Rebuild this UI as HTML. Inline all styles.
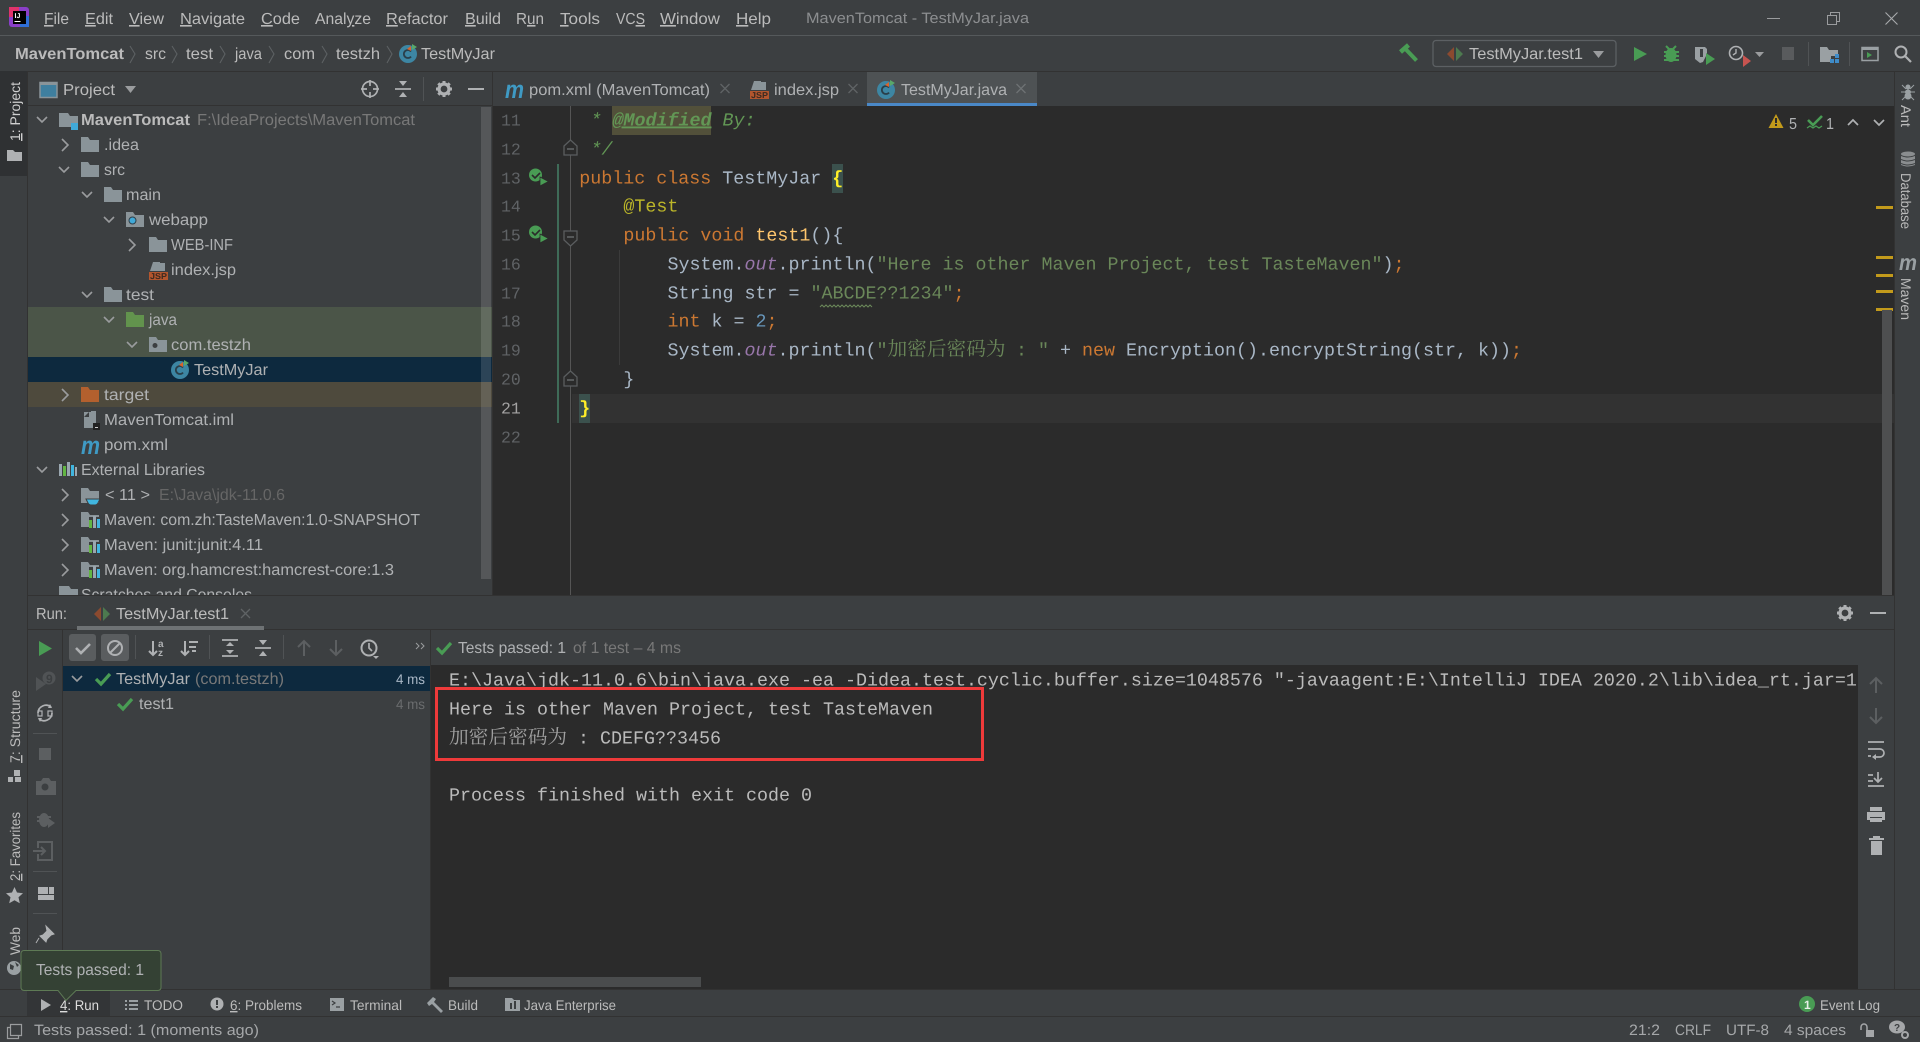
<!DOCTYPE html>
<html><head><meta charset="utf-8"><title>MavenTomcat</title>
<style>
html,body{margin:0;padding:0;background:#3c3f41;overflow:hidden}
svg{display:block}
text{font-family:"Liberation Sans","Noto Sans CJK SC",sans-serif;font-size:16px;fill:#bbb;white-space:pre;text-rendering:geometricPrecision}
.t{fill:#afb1b3}
.g{fill:#787878}
.sm{font-size:14px}
.m{font-family:"Liberation Mono",monospace;font-size:18.34px;fill:#a9b7c6;white-space:pre}
.c{font-family:"Liberation Mono",monospace;font-size:18.34px;fill:#bbb;white-space:pre}
.ln{font-family:"Liberation Mono",monospace;font-size:16.5px;fill:#606366}
.cj{font-family:"Noto Serif CJK SC","Noto Sans CJK SC",serif;font-size:19.7px}
.k{fill:#cc7832}.s{fill:#6a8759}.d{fill:#629755;font-style:italic}.o{fill:#9876aa;font-style:italic}.n{fill:#6897bb}.a{fill:#bbb529}.f{fill:#ffc66d}
.ch{fill:none;stroke:#9a9c9e;stroke-width:1.6}
.ic{fill:none;stroke:#afb1b3;stroke-width:1.7}
.dis{fill:none;stroke:#5c5f61;stroke-width:2}
</style></head>
<body>
<svg width="1920" height="1042" viewBox="0 0 1920 1042" xmlns="http://www.w3.org/2000/svg">
<defs>
<path id="fo" d="M0 0h7l2 3h9v12H0z"/>
<g id="cl"><circle cx="9" cy="10" r="9" fill="#3d86a3"/><path d="M12 7.500a4 4 0 1 0 0 5" fill="none" stroke="#2a3f4a" stroke-width="1.800"/><path d="M8 5l4-3v5z" fill="#d9642b"/><path d="M13 0l5 3-5 3z" fill="#59a869"/></g>
<g id="dm"><path d="M7 0L0 7l7 7z" fill="#8c4a2f"/><path d="M9 0l7 7-7 7z" fill="#4d7a4f"/></g>
<g id="lib"><use href="#fo" fill="#8a9499"/><rect x="8" y="5" width="11" height="11" fill="#3c3f41"/><rect x="8" y="8" width="3" height="8" fill="#62b543"/><rect x="12" y="4" width="3" height="12" fill="#9aa7b0"/><rect x="16" y="7" width="3" height="9" fill="#40b6e0"/></g>
<g id="gr"><circle cx="5.500" cy="6" r="6.500" fill="#499c54"/><path d="M2 6l3 3 5-5" fill="none" stroke="#2b2b2b" stroke-width="1.600"/><path d="M10 8l8.500 4.500L10 17z" fill="#499c54" stroke="#2b2b2b" stroke-width=".8"/></g>
<g id="gear"><circle cx="8" cy="8" r="5" fill="none" stroke="#afb1b3" stroke-width="3.200"/><path d="M8 0v3M8 13v3M0 8h3M13 8h3M2.300 2.300l2 2M11.700 11.700l2 2M13.700 2.300l-2 2M4.300 11.700l-2 2" stroke="#afb1b3" stroke-width="3"/></g>
<g id="ck"><path d="M0 6l5 5L14 1" fill="none" stroke="#499c54" stroke-width="3.200"/></g>
<g id="fd"><path d="M0 6l6.500-6 6.500 6v9H0z" fill="#2b2b2b" stroke="#5a5d5f" stroke-width="1.300"/><path d="M3 9h7" stroke="#6e7274" stroke-width="1.300"/></g>
</defs>

<rect width="1920" height="1042" fill="#3c3f41"/>

<!-- title bar -->
<rect x="0" y="35" width="1920" height="1" fill="#55595b"/>
<g>
<rect x="9" y="7" width="20" height="20" rx="3" fill="#8a3fc8"/><rect x="9" y="7" width="10" height="10" fill="#e0336b"/><rect x="20" y="16" width="9" height="11" fill="#2f6fd6"/><rect x="13" y="11" width="13" height="13" fill="#000"/>
<text x="14.500" y="18" style="font-size:7px;font-weight:bold;fill:#fff">IJ</text><rect x="14.500" y="21" width="6" height="1" fill="#fff"/>
</g>
<text x="44" y="24" textLength="25" lengthAdjust="spacingAndGlyphs"><tspan text-decoration="underline">F</tspan>ile</text>
<text x="85" y="24" textLength="28" lengthAdjust="spacingAndGlyphs"><tspan text-decoration="underline">E</tspan>dit</text>
<text x="129" y="24" textLength="35" lengthAdjust="spacingAndGlyphs"><tspan text-decoration="underline">V</tspan>iew</text>
<text x="180" y="24" textLength="65" lengthAdjust="spacingAndGlyphs"><tspan text-decoration="underline">N</tspan>avigate</text>
<text x="261" y="24" textLength="39" lengthAdjust="spacingAndGlyphs"><tspan text-decoration="underline">C</tspan>ode</text>
<text x="315" y="24" textLength="56" lengthAdjust="spacingAndGlyphs">Anal<tspan text-decoration="underline">y</tspan>ze</text>
<text x="386" y="24" textLength="62" lengthAdjust="spacingAndGlyphs"><tspan text-decoration="underline">R</tspan>efactor</text>
<text x="465" y="24" textLength="36" lengthAdjust="spacingAndGlyphs"><tspan text-decoration="underline">B</tspan>uild</text>
<text x="516" y="24" textLength="28" lengthAdjust="spacingAndGlyphs">R<tspan text-decoration="underline">u</tspan>n</text>
<text x="560" y="24" textLength="40" lengthAdjust="spacingAndGlyphs"><tspan text-decoration="underline">T</tspan>ools</text>
<text x="616" y="24" textLength="29" lengthAdjust="spacingAndGlyphs">VC<tspan text-decoration="underline">S</tspan></text>
<text x="660" y="24" textLength="60" lengthAdjust="spacingAndGlyphs"><tspan text-decoration="underline">W</tspan>indow</text>
<text x="736" y="24" textLength="35" lengthAdjust="spacingAndGlyphs"><tspan text-decoration="underline">H</tspan>elp</text>
<text x="806" y="23" textLength="223" lengthAdjust="spacingAndGlyphs" style="fill:#8c8e90;font-size:15px">MavenTomcat - TestMyJar.java</text>
<path d="M1767 18.500h13" stroke="#9a9c9e" stroke-width="1"/>
<path d="M1827.500 15.500h9v9h-9zM1830.500 15.500v-3h9v9h-3" fill="none" stroke="#9a9c9e"/>
<path d="M1885.500 12.500l12 12M1897.500 12.500l-12 12" stroke="#a8aaac" stroke-width="1.100"/>

<!-- nav bar -->
<rect x="0" y="71" width="1920" height="1" fill="#323232"/>
<text x="15" y="59" textLength="109" lengthAdjust="spacingAndGlyphs" style="font-weight:bold">MavenTomcat</text>
<text x="145" y="59" textLength="21" lengthAdjust="spacingAndGlyphs">src</text>
<text x="186" y="59" textLength="27" lengthAdjust="spacingAndGlyphs">test</text>
<text x="235" y="59" textLength="27" lengthAdjust="spacingAndGlyphs">java</text>
<text x="284" y="59" textLength="31" lengthAdjust="spacingAndGlyphs">com</text>
<text x="336" y="59" textLength="44" lengthAdjust="spacingAndGlyphs">testzh</text>
<text x="421" y="59" textLength="74" lengthAdjust="spacingAndGlyphs">TestMyJar</text>
<path d="M130 46l5 8-5 9M172 46l5 8-5 9M220 46l5 8-5 9M269 46l5 8-5 9M322 46l5 8-5 9M387 46l5 8-5 9" fill="none" stroke="#5d6163" stroke-width="1.100"/>
<use href="#cl" x="399" y="44"/>

<!-- toolbar right -->
<path d="M1400.500 52l8-7" stroke="#499c54" stroke-width="4.500" fill="none"/><path d="M1406 49.500l10.500 11" stroke="#499c54" stroke-width="4" fill="none"/>
<rect x="1433" y="40.500" width="183" height="26" rx="3" fill="none" stroke="#5c6063" stroke-width="1.300"/>
<use href="#dm" x="1447" y="47"/>
<text x="1469" y="59" textLength="114" lengthAdjust="spacingAndGlyphs">TestMyJar.test1</text>
<path d="M1593 51h11l-5.500 7z" fill="#9a9c9e"/>
<path d="M1634 47l13 7-13 7z" fill="#499c54"/>
<g fill="#499c54"><ellipse cx="1671" cy="55" rx="5.500" ry="7"/><rect x="1664" y="51" width="15" height="2"/><rect x="1664" y="55" width="15" height="2"/><rect x="1664" y="59" width="15" height="2"/><path d="M1666 46l3 3M1676 46l-3 3" stroke="#499c54" stroke-width="2"/></g>
<path d="M1695 47h10l2 2v5l-4 8-3 1-5-4z" fill="#9aa0a3"/><path d="M1700 49h3v8h-3z" fill="#3c3f41"/><path d="M1706 53l9 6-9 6z" fill="#499c54"/>
<circle cx="1736" cy="53" r="6.500" fill="none" stroke="#afb1b3" stroke-width="1.600"/><path d="M1736 49v4l-3 2" fill="none" stroke="#afb1b3" stroke-width="1.400"/><path d="M1743 55l8 6-8 6z" fill="#c75450"/>
<path d="M1755 52h9l-4.500 5z" fill="#9a9c9e"/>
<rect x="1782" y="47" width="12" height="13" fill="#595b5d"/>
<rect x="1808" y="42" width="1" height="24" fill="#505355"/>
<path d="M1820 47h7l2 3h9v6h-7v6h-11z" fill="#9aa0a3"/><g fill="#3f8cc9"><rect x="1830" y="59" width="4" height="4"/><rect x="1835" y="59" width="4" height="4"/><rect x="1835" y="54" width="4" height="4"/></g>
<rect x="1849" y="42" width="1" height="24" fill="#505355"/>
<rect x="1862" y="47.500" width="16" height="13" fill="none" stroke="#9aa0a3" stroke-width="1.500"/><rect x="1862" y="47" width="16" height="3" fill="#9aa0a3"/><path d="M1867 52l5 3-5 3z" fill="#499c54"/>
<circle cx="1901" cy="52" r="5.500" fill="none" stroke="#afb1b3" stroke-width="2"/><path d="M1905 56l6 6" stroke="#afb1b3" stroke-width="2.200"/>

<!-- left strip -->
<rect x="27" y="72" width="1" height="918" fill="#323232"/>
<rect x="0" y="71" width="27" height="105" fill="#2f3133"/>
<text transform="translate(20,141) rotate(-90)" textLength="59" lengthAdjust="spacingAndGlyphs" class="sm" style="fill:#d0d0d0"><tspan text-decoration="underline">1</tspan>: Project</text>
<path d="M7 150h6l2 2h7v9H7z" fill="#afb1b3"/>
<text transform="translate(20,763) rotate(-90)" textLength="73" lengthAdjust="spacingAndGlyphs" class="sm"><tspan text-decoration="underline">7</tspan>: Structure</text>
<g fill="#afb1b3"><rect x="14" y="770" width="6" height="6"/><rect x="8" y="777" width="5" height="5"/><rect x="15" y="777" width="6" height="5"/></g>
<text transform="translate(20,881) rotate(-90)" textLength="69" lengthAdjust="spacingAndGlyphs" class="sm"><tspan text-decoration="underline">2</tspan>: Favorites</text>
<path d="M14.500 887l2.500 5.500 6 .7-4.500 4 1.300 6-5.300-3-5.300 3 1.300-6-4.500-4 6-.7z" fill="#afb1b3"/>
<text transform="translate(20,955) rotate(-90)" textLength="28" lengthAdjust="spacingAndGlyphs" class="sm">Web</text>
<circle cx="14" cy="968" r="7" fill="#9aa0a3"/><path d="M10 964l4 2-1 4-3-1zM15 962l4 3-2 2z" fill="#3c3f41"/>

<!-- project header -->
<rect x="28" y="105" width="464" height="1" fill="#323232"/>
<rect x="40" y="82.500" width="17" height="15" fill="#3f7f9f" stroke="#8a9499" stroke-width="1.500"/><rect x="40" y="82" width="17" height="3" fill="#8a9499"/>
<text x="63" y="95" textLength="52" lengthAdjust="spacingAndGlyphs">Project</text>
<path d="M125 86h11l-5.500 7z" fill="#9a9c9e"/>
<circle cx="370" cy="89" r="7.500" class="ic"/><path d="M370 80v6M370 92v6M361 89h6M373 89h6" class="ic"/>
<path d="M395 89h16" class="ic"/><path d="M399 81l4 5 4-5zM399 97l4-5 4 5z" fill="#afb1b3"/>
<rect x="423" y="77" width="1" height="24" fill="#505355"/>
<use href="#gear" x="436" y="81"/>
<rect x="468" y="88" width="16" height="2" fill="#afb1b3"/>

<!-- tree row bgs -->
<rect x="28" y="307" width="464" height="50" fill="#4b5548"/>
<rect x="28" y="357" width="464" height="25" fill="#0d293e"/>
<rect x="28" y="382" width="464" height="25" fill="#4e4a3d"/>

<!-- chevrons -->
<g class="ch">
<path d="M37 117l5 5 5-5M59 167l5 5 5-5M82 192l5 5 5-5M104 217l5 5 5-5M82 292l5 5 5-5M104 317l5 5 5-5M127 342l5 5 5-5M37 467l5 5 5-5"/>
<path d="M62 139l6 6-6 6M129 239l6 6-6 6M62 389l6 6-6 6M62 489l6 6-6 6M62 514l6 6-6 6M62 539l6 6-6 6M62 564l6 6-6 6"/>
</g>

<!-- tree icons -->
<path d="M59 113h9l2 3h8v11H59z" fill="#8a9499"/><rect x="71" y="123" width="7" height="7" fill="#40a9d8"/>
<use href="#fo" x="81" y="137" fill="#8a9499"/>
<use href="#fo" x="81" y="162" fill="#8a9499"/>
<use href="#fo" x="104" y="187" fill="#8a9499"/>
<use href="#fo" x="126" y="212" fill="#8a9499"/><circle cx="132.500" cy="220.500" r="3.500" fill="#40a9d8" stroke="#2f3f49"/>
<use href="#fo" x="149" y="237" fill="#8a9499"/>
<path d="M153 262h7v9h-10zM160 263h5v8h-5z" fill="#8a9499"/><rect x="149" y="272" width="19" height="8" fill="#b3562e"/><text x="150" y="279" textLength="17" lengthAdjust="spacingAndGlyphs" style="font-size:8.500px;font-weight:bold;fill:#3c2a20">JSP</text>
<use href="#fo" x="104" y="287" fill="#8a9499"/>
<use href="#fo" x="126" y="312" fill="#62934d"/>
<use href="#fo" x="149" y="337" fill="#8a9499"/><circle cx="155" cy="345.500" r="2.500" fill="#3c3f41"/>
<use href="#cl" x="171" y="360"/>
<use href="#fo" x="81" y="387" fill="#b3602e"/>
<path d="M84 412h7v-1h5v17H84z" fill="#8a9499"/><path d="M84 417l5-5v5z" fill="#3c3f41"/><rect x="93" y="423" width="7" height="7" fill="#222"/><rect x="95" y="427" width="3" height="1" fill="#ccc"/>
<text x="81" y="454" textLength="19" lengthAdjust="spacingAndGlyphs" style="font-size:25px;font-weight:bold;font-style:italic;fill:#3f9ac4">m</text>
<g><rect x="59" y="464" width="3" height="12" fill="#9aa7b0"/><rect x="63" y="466" width="3" height="10" fill="#62b543"/><rect x="67" y="462" width="3" height="14" fill="#9aa7b0"/><rect x="71" y="465" width="3" height="11" fill="#40b6e0"/><rect x="75" y="467" width="2" height="9" fill="#9aa7b0"/></g>
<use href="#fo" x="81" y="488" fill="#8a9499"/><path d="M86 499h14l-2 4q-1 2-3 2h-4q-2 0-3-2z" fill="#40b6e0" stroke="#3c3f41"/>
<use href="#lib" x="81" y="512"/><use href="#lib" x="81" y="537"/><use href="#lib" x="81" y="562"/>
<path d="M59 586h10l2 3h7v9H59z" fill="#8a9499"/>

<!-- tree text -->
<text x="81" y="125" textLength="109" lengthAdjust="spacingAndGlyphs" style="font-weight:bold">MavenTomcat</text>
<text x="197" y="125" textLength="218" lengthAdjust="spacingAndGlyphs" class="g">F:\IdeaProjects\MavenTomcat</text>
<text x="104" y="150" textLength="35" lengthAdjust="spacingAndGlyphs" class="t">.idea</text>
<text x="104" y="175" textLength="21" lengthAdjust="spacingAndGlyphs" class="t">src</text>
<text x="126" y="200" textLength="35" lengthAdjust="spacingAndGlyphs" class="t">main</text>
<text x="149" y="225" textLength="59" lengthAdjust="spacingAndGlyphs" class="t">webapp</text>
<text x="171" y="250" textLength="62" lengthAdjust="spacingAndGlyphs" class="t">WEB-INF</text>
<text x="171" y="275" textLength="65" lengthAdjust="spacingAndGlyphs" class="t">index.jsp</text>
<text x="126" y="300" textLength="28" lengthAdjust="spacingAndGlyphs" class="t">test</text>
<text x="149" y="325" textLength="28" lengthAdjust="spacingAndGlyphs" class="t">java</text>
<text x="171" y="350" textLength="80" lengthAdjust="spacingAndGlyphs" class="t">com.testzh</text>
<text x="194" y="375" textLength="74" lengthAdjust="spacingAndGlyphs" class="t">TestMyJar</text>
<text x="104" y="400" textLength="45" lengthAdjust="spacingAndGlyphs" class="t">target</text>
<text x="104" y="425" textLength="130" lengthAdjust="spacingAndGlyphs" class="t">MavenTomcat.iml</text>
<text x="104" y="450" textLength="64" lengthAdjust="spacingAndGlyphs" class="t">pom.xml</text>
<text x="81" y="475" textLength="124" lengthAdjust="spacingAndGlyphs" class="t">External Libraries</text>
<text x="105" y="500" textLength="45" lengthAdjust="spacingAndGlyphs" class="t">&lt; 11 &gt;</text>
<text x="159" y="500" textLength="126" lengthAdjust="spacingAndGlyphs" style="fill:#666">E:\Java\jdk-11.0.6</text>
<text x="104" y="525" textLength="316" lengthAdjust="spacingAndGlyphs" class="t">Maven: com.zh:TasteMaven:1.0-SNAPSHOT</text>
<text x="104" y="550" textLength="159" lengthAdjust="spacingAndGlyphs" class="t">Maven: junit:junit:4.11</text>
<text x="104" y="575" textLength="290" lengthAdjust="spacingAndGlyphs" class="t">Maven: org.hamcrest:hamcrest-core:1.3</text>
<text x="81" y="600" textLength="171" lengthAdjust="spacingAndGlyphs" class="t">Scratches and Consoles</text>
<rect x="481" y="107" width="10" height="472" fill="#fff" opacity=".13"/>

<!-- tabs -->
<rect x="492" y="72" width="1" height="524" fill="#323232"/>
<rect x="867" y="72" width="170" height="31" fill="#4e5254"/>
<rect x="867" y="103" width="170" height="3" fill="#4a88c7"/>
<text x="505" y="98" textLength="19" lengthAdjust="spacingAndGlyphs" style="font-size:25px;font-weight:bold;font-style:italic;fill:#3f9ac4">m</text>
<text x="529" y="95" textLength="181" lengthAdjust="spacingAndGlyphs" class="t">pom.xml (MavenTomcat)</text>
<path d="M720.500 84l9 9M729.500 84l-9 9M848.500 84l9 9M857.500 84l-9 9" stroke="#5f6365" stroke-width="1.300"/>
<path d="M754 81h7v9h-10zM761 82h5v8h-5z" fill="#8a9499"/><rect x="750" y="91" width="19" height="8" fill="#b3562e"/><text x="751" y="98" textLength="17" lengthAdjust="spacingAndGlyphs" style="font-size:8.500px;font-weight:bold;fill:#3c2a20">JSP</text>
<text x="774" y="95" textLength="65" lengthAdjust="spacingAndGlyphs" class="t">index.jsp</text>
<use href="#cl" x="877" y="80"/>
<text x="901" y="95" textLength="106" lengthAdjust="spacingAndGlyphs" class="t">TestMyJar.java</text>
<path d="M1016.500 84l9 9M1025.500 84l-9 9" stroke="#6e7274" stroke-width="1.300"/>

<!-- editor -->
<rect x="493" y="106" width="1401" height="490" fill="#2b2b2b"/>
<rect x="572" y="394" width="1322" height="29" fill="#323232"/>
<rect x="570" y="106" width="1" height="490" fill="#555"/>
<rect x="557" y="164" width="2" height="259" fill="#3f6b58"/>
<rect x="619" y="250" width="1" height="115" fill="#3b3b3b"/>
<rect x="612" y="106" width="99" height="29" fill="#52503a"/>
<rect x="832" y="164" width="11" height="29" fill="#3b514d"/>
<rect x="579" y="394" width="11" height="29" fill="#3b514d"/>

<g>
<text class="ln" x="501" y="125.500">11</text><text class="ln" x="501" y="154.500">12</text><text class="ln" x="501" y="183.500">13</text><text class="ln" x="501" y="211.500">14</text><text class="ln" x="501" y="240.500">15</text><text class="ln" x="501" y="269.500">16</text><text class="ln" x="501" y="298.500">17</text><text class="ln" x="501" y="326.500">18</text><text class="ln" x="501" y="355.500">19</text><text class="ln" x="501" y="384.500">20</text><text class="ln" x="501" y="413.500" style="fill:#a4a3a3">21</text><text class="ln" x="501" y="442.500">22</text>
</g>
<use href="#gr" x="530" y="169"/><use href="#gr" x="530" y="226"/>
<use href="#fd" x="564" y="140"/>
<g transform="translate(577,246) rotate(180)"><use href="#fd" x="0" y="0"/></g>
<use href="#fd" x="564" y="371"/>

<text class="m" x="590.500" y="125.500" style="fill:#629755;font-style:italic">* <tspan text-decoration="underline" font-weight="bold">@Modified</tspan> By:</text>
<text class="m" x="590.500" y="154.500" style="fill:#629755;font-style:italic">*/</text>
<text class="m" x="579.300" y="183.500"><tspan class="k">public class</tspan> TestMyJar <tspan style="fill:#ffef28;font-weight:bold">{</tspan></text>
<text class="m" x="623.400" y="211.500" style="fill:#bbb529">@Test</text>
<text class="m" x="623.400" y="240.500"><tspan class="k">public void</tspan> <tspan class="f">test1</tspan>(){</text>
<text class="m" x="667.500" y="269.500">System.<tspan class="o">out</tspan>.println(<tspan class="s">"Here is other Maven Project, test TasteMaven"</tspan>)<tspan class="k">;</tspan></text>
<text class="m" x="667.500" y="298.500">String str = <tspan class="s">"ABCDE??1234"</tspan><tspan class="k">;</tspan></text>
<path d="M820 307l2-2 2 2 2-2 2 2 2-2 2 2 2-2 2 2 2-2 2 2 2-2 2 2 2-2 2 2 2-2 2 2 2-2 2 2 2-2 2 2 2-2 2 2 2-2 2 2 2-2 2 2" fill="none" stroke="#6a8759" stroke-width="1"/>
<text class="m" x="667.500" y="326.500"><tspan class="k">int</tspan> k = <tspan class="n">2</tspan><tspan class="k">;</tspan></text>
<text class="m" x="667.500" y="355.500">System.<tspan class="o">out</tspan>.println(<tspan class="s">"</tspan></text>
<text class="cj" x="887.500" y="355.500" style="fill:#6a8759">加密后密码为</text>
<text class="m" x="1005" y="355.500"><tspan class="s"> : "</tspan> + <tspan class="k">new</tspan> Encryption().encryptString(str, k))<tspan class="k">;</tspan></text>
<text class="m" x="623.400" y="384.500">}</text>
<text class="m" x="579.300" y="413.500" style="fill:#ffef28;font-weight:bold">}</text>

<!-- editor top-right status -->
<path d="M1776 114l7.500 14h-15z" fill="#c29a1b"/><rect x="1775" y="118" width="2" height="5" fill="#2b2b2b"/><rect x="1775" y="124" width="2" height="2" fill="#2b2b2b"/>
<text x="1789" y="129" textLength="8" lengthAdjust="spacingAndGlyphs" class="t">5</text>
<path d="M1808 120l5 5 9-9" fill="none" stroke="#499c54" stroke-width="2.600"/><path d="M1807 128l3-2 3 2 3-2 3 2 3-2" fill="none" stroke="#499c54" stroke-width="1.200"/>
<text x="1826" y="129" textLength="8" lengthAdjust="spacingAndGlyphs" class="t">1</text>
<path d="M1848 125l5-5 5 5" class="ic"/><path d="M1874 120l5 5 5-5" class="ic"/>
<g fill="#c29a1b"><rect x="1876" y="206" width="17" height="3"/><rect x="1876" y="256" width="17" height="3"/><rect x="1876" y="274" width="17" height="3"/><rect x="1876" y="290" width="17" height="3"/><rect x="1876" y="308" width="17" height="3"/></g>
<rect x="1882" y="310" width="10" height="285" fill="#4e4f50"/>

<!-- right strip -->
<rect x="1894" y="72" width="1" height="918" fill="#323232"/>
<g fill="#9aa0a3"><circle cx="1908" cy="87" r="2.500"/><ellipse cx="1908" cy="92" rx="3" ry="2.500"/><ellipse cx="1908" cy="96" rx="3.500" ry="3.500"/></g><path d="M1902 85l4 4M1914 85l-4 4M1901 92h14M1902 100l4-4M1914 100l-4-4" stroke="#9aa0a3" stroke-width="1"/>
<text transform="translate(1901,105) rotate(90)" textLength="22" lengthAdjust="spacingAndGlyphs" class="sm">Ant</text>
<g fill="#8a8d8f"><ellipse cx="1908" cy="154" rx="7" ry="2.500"/><path d="M1901 156q7 3 14 0v3q-7 3-14 0zM1901 160q7 3 14 0v3q-7 3-14 0zM1901 164q7 3 14 0v1q-7 3-14 0z"/></g>
<text transform="translate(1901,173) rotate(90)" textLength="56" lengthAdjust="spacingAndGlyphs" class="sm">Database</text>
<text x="1899" y="270" textLength="18" lengthAdjust="spacingAndGlyphs" style="font-size:22px;font-weight:bold;font-style:italic;fill:#9aa0a3">m</text>
<text transform="translate(1901,278) rotate(90)" textLength="42" lengthAdjust="spacingAndGlyphs" class="sm">Maven</text>

<!-- run panel -->
<rect x="28" y="595" width="1866" height="395" fill="#3c3f41"/>
<rect x="28" y="595" width="1866" height="1" fill="#323232"/>
<rect x="28" y="629" width="1866" height="1" fill="#323232"/>
<text x="36" y="619" textLength="31" lengthAdjust="spacingAndGlyphs">Run:</text>
<use href="#dm" x="94" y="607"/>
<text x="116" y="619" textLength="113" lengthAdjust="spacingAndGlyphs">TestMyJar.test1</text>
<path d="M241 609l9 9M250 609l-9 9" stroke="#5f6365" stroke-width="1.300"/>
<rect x="77" y="626" width="187" height="4" fill="#6e7274"/>
<use href="#gear" x="1837" y="605"/>
<rect x="1870" y="612" width="16" height="2" fill="#afb1b3"/>

<!-- run left toolbar -->
<rect x="62" y="630" width="1" height="360" fill="#323232"/>
<path d="M39 641l13 7.500-13 7.500z" fill="#499c54"/>
<g><path d="M36 677l10 7-10 7z" fill="#505355"/><circle cx="49" cy="678" r="6.500" fill="#505355"/><text x="46" y="683" style="font-size:12px;font-weight:bold;fill:#3c3f41">9</text></g>
<path d="M38 713a8 8 0 0 1 13-6M52 713a8 8 0 0 1-13 6" class="ic"/><path d="M50 704l2 4-4 0zM40 722l-2-4 4 0z" fill="#afb1b3"/><rect x="38" y="711" width="4" height="5" class="ic" style="stroke-width:1.200"/><rect x="48" y="711" width="4" height="5" class="ic" style="stroke-width:1.200"/>
<rect x="33" y="733" width="24" height="1" fill="#505355"/>
<rect x="39" y="748" width="12" height="12" fill="#5c5f61"/>
<path d="M36 781h5l2-3h6l2 3h5v14H36z" fill="#5c5f61"/><circle cx="45" cy="787" r="3.500" fill="#3c3f41"/>
<g fill="#5c5f61"><ellipse cx="44" cy="820" rx="5" ry="7"/><rect x="37" y="816" width="14" height="2"/><rect x="37" y="820" width="14" height="2"/><path d="M48 818l7 5-7 5z"/></g>
<path d="M38 848v-6h14v18H38v-6M33 851h12M41 847l4 4-4 4" class="dis"/>
<rect x="33" y="871" width="24" height="1" fill="#505355"/>
<g fill="#afb1b3"><rect x="38" y="887" width="10" height="7"/><rect x="49" y="887" width="5" height="7"/><rect x="38" y="895" width="16" height="5"/></g>
<rect x="33" y="913" width="24" height="1" fill="#505355"/>
<path d="M46 926l8 8-3 1-4 4-1 3-6-6 3-1 4-4zM39 938l-3 5" fill="#afb1b3" stroke="#afb1b3"/>

<!-- run top toolbar -->
<rect x="69" y="634" width="27" height="27" rx="3" fill="#5a5d5f"/>
<rect x="101" y="634" width="28" height="27" rx="3" fill="#5a5d5f"/>
<path d="M76 648l5 5 9-9" fill="none" stroke="#afb1b3" stroke-width="2.600"/>
<circle cx="115" cy="648" r="7" fill="none" stroke="#afb1b3" stroke-width="2"/><path d="M110.500 652.500l9-9" stroke="#afb1b3" stroke-width="2"/>
<rect x="135" y="635" width="1" height="24" fill="#505355"/>
<path d="M153 641v13M149 651l4 4 4-4" class="ic" style="stroke-width:2"/>
<text x="158" y="647" style="font-size:10px;font-weight:bold;fill:#afb1b3">a</text><text x="158" y="656" style="font-size:10px;font-weight:bold;fill:#afb1b3">z</text>
<path d="M185 641v13M181 651l4 4 4-4" class="ic" style="stroke-width:2"/><path d="M189 642h9M189 647h7M192 651h4" class="ic" style="stroke-width:2"/>
<rect x="209" y="635" width="1" height="24" fill="#505355"/>
<path d="M222 640h16M222 656h16" class="ic"/><path d="M226 646l4-4 4 4zM226 650l4 4 4-4z" fill="#afb1b3"/>
<path d="M255 648h16" class="ic"/><path d="M259 640l4 5 4-5zM259 656l4-5 4 5z" fill="#afb1b3"/>
<rect x="283" y="635" width="1" height="24" fill="#505355"/>
<path d="M304 656v-15M298 647l6-6 6 6" class="dis"/>
<path d="M336 640v15M330 649l6 6 6-6" class="dis"/>
<circle cx="369" cy="648" r="7.500" class="ic" style="stroke-width:2"/><path d="M369 643v5l3 3" class="ic"/><path d="M373 656h6l-3 3z" fill="#afb1b3"/>
<path d="M416 643l3 3-3 3M421 643l3 3-3 3" fill="none" stroke="#9a9c9e" stroke-width="1"/>
<use href="#ck" x="437" y="642"/>
<text x="458" y="653" textLength="108" lengthAdjust="spacingAndGlyphs" class="t">Tests passed: 1</text>
<text x="573" y="653" textLength="108" lengthAdjust="spacingAndGlyphs" class="g">of 1 test – 4 ms</text>

<!-- test tree -->
<rect x="63" y="666" width="367" height="25" fill="#0d293e"/>
<path d="M72 676l5 5 5-5" class="ch"/>
<use href="#ck" x="96" y="673"/>
<text x="116" y="684" textLength="74" lengthAdjust="spacingAndGlyphs" class="t">TestMyJar</text>
<text x="195" y="684" textLength="89" lengthAdjust="spacingAndGlyphs" class="g">(com.testzh)</text>
<text x="396" y="684" textLength="29" lengthAdjust="spacingAndGlyphs" class="sm" style="fill:#a9b7c6">4 ms</text>
<use href="#ck" x="118" y="698"/>
<text x="139" y="709" textLength="35" lengthAdjust="spacingAndGlyphs" class="t">test1</text>
<text x="396" y="709" textLength="29" lengthAdjust="spacingAndGlyphs" class="sm" style="fill:#6a6c6e">4 ms</text>

<!-- console -->
<rect x="431" y="665" width="1427" height="324" fill="#2b2b2b"/>
<rect x="430" y="630" width="1" height="360" fill="#323232"/>
<text class="c" x="449" y="685.500">E:\Java\jdk-11.0.6\bin\java.exe -ea -Didea.test.cyclic.buffer.size=1048576 "-javaagent:E:\IntelliJ IDEA 2020.2\lib\idea_rt.jar=1</text>
<text class="c" x="449" y="714.500">Here is other Maven Project, test TasteMaven</text>
<text class="cj" x="449" y="743.500" style="fill:#a0a0a0">加密后密码为</text>
<text class="c" x="567" y="743.500"> : CDEFG??3456</text>
<text class="c" x="449" y="800.500">Process finished with exit code 0</text>
<rect x="436.500" y="688.500" width="546" height="71" fill="none" stroke="#ef3a3a" stroke-width="3"/>
<rect x="449" y="977" width="252" height="10" fill="#4a4c4d"/>

<!-- console right toolbar -->
<path d="M1876 693v-15M1870 684l6-6 6 6" class="dis"/>
<path d="M1876 708v15M1870 717l6 6 6-6" class="dis"/>
<path d="M1868 742h16M1868 749h12a4 4 0 0 1 0 8h-6M1868 756h3" class="ic"/><path d="M1876 754l-4 3 4 3z" fill="#afb1b3"/>
<path d="M1868 775h5M1868 781h5M1868 786h16M1878 772v9M1874 778l4 4 4-4" class="ic"/>
<path d="M1870 807h12v4h-12zM1867 812h18v8h-3v-3h-12v3h-3zM1870 818h12v4h-12z" fill="#afb1b3"/>
<path d="M1871 841h11v14h-11zM1869 838h15v2h-15zM1873 836h7v2h-7z" fill="#afb1b3"/>

<!-- tool window bar -->
<rect x="0" y="989" width="1920" height="1" fill="#323232"/>
<rect x="0" y="1016" width="1920" height="1" fill="#323232"/>
<rect x="27" y="990" width="83" height="26" fill="#333537"/>
<path d="M41 999l10 6-10 6z" fill="#afb1b3"/>
<text x="60" y="1010" textLength="39" lengthAdjust="spacingAndGlyphs" class="sm" style="fill:#ddd"><tspan text-decoration="underline">4</tspan>: Run</text>
<path d="M125 1000h2v2h-2zM125 1004h2v2h-2zM125 1008h2v2h-2zM129 1000h9v2h-9zM129 1004h9v2h-9zM129 1008h9v2h-9z" fill="#9aa0a3"/>
<text x="144" y="1010" textLength="39" lengthAdjust="spacingAndGlyphs" class="sm">TODO</text>
<circle cx="217" cy="1004" r="6.500" fill="#afb1b3"/><rect x="216" y="1000" width="2" height="5" fill="#3c3f41"/><rect x="216" y="1006" width="2" height="2" fill="#3c3f41"/>
<text x="230" y="1010" textLength="72" lengthAdjust="spacingAndGlyphs" class="sm"><tspan text-decoration="underline">6</tspan>: Problems</text>
<rect x="330" y="998" width="14" height="13" fill="#9aa0a3"/><path d="M332 1001l3 2-3 2M336 1007h4" fill="none" stroke="#3c3f41" stroke-width="1.200"/>
<text x="350" y="1010" textLength="52" lengthAdjust="spacingAndGlyphs" class="sm">Terminal</text>
<path d="M427 1003l6-6 3 2-2 3 9 9-2 2-9-9-3 2z" fill="#9aa0a3"/>
<text x="448" y="1010" textLength="30" lengthAdjust="spacingAndGlyphs" class="sm">Build</text>
<path d="M505 998h7l2 2h6v11h-15z" fill="#9aa0a3"/><rect x="510" y="1003" width="2" height="6" fill="#3c3f41"/><rect x="514" y="1001" width="2" height="8" fill="#3c3f41"/>
<text x="524" y="1010" textLength="92" lengthAdjust="spacingAndGlyphs" class="sm">Java Enterprise</text>
<circle cx="1807" cy="1004" r="8" fill="#499c54"/><text x="1804" y="1009" style="font-size:12px;font-weight:bold;fill:#e8f0e8">1</text>
<text x="1820" y="1010" textLength="60" lengthAdjust="spacingAndGlyphs" class="sm">Event Log</text>

<!-- status bar -->
<path d="M10.500 1024.500h11v11h-11zM10.500 1027.500h-3v11h11v-3" fill="none" stroke="#9a9c9e" stroke-width="1.200"/>
<text x="34" y="1035" textLength="225" lengthAdjust="spacingAndGlyphs" style="fill:#a5a7a9;font-size:15px">Tests passed: 1 (moments ago)</text>
<text x="1629" y="1035" textLength="31" lengthAdjust="spacingAndGlyphs" style="fill:#a5a7a9;font-size:15px">21:2</text>
<text x="1675" y="1035" textLength="36" lengthAdjust="spacingAndGlyphs" style="fill:#a5a7a9;font-size:15px">CRLF</text>
<text x="1726" y="1035" textLength="43" lengthAdjust="spacingAndGlyphs" style="fill:#a5a7a9;font-size:15px">UTF-8</text>
<text x="1784" y="1035" textLength="62" lengthAdjust="spacingAndGlyphs" style="fill:#a5a7a9;font-size:15px">4 spaces</text>
<rect x="1866" y="1030" width="8" height="7" fill="#a5a7a9"/><path d="M1861 1030v-3a3 3 0 0 1 6 0v3" fill="none" stroke="#a5a7a9" stroke-width="1.500"/>
<ellipse cx="1897" cy="1027" rx="8" ry="6.500" fill="#a5a7a9"/><circle cx="1905" cy="1035" r="3" fill="none" stroke="#a5a7a9" stroke-width="2"/><text x="1894" y="1031" style="font-size:10px;font-weight:bold;fill:#3c3f41">?</text>

<!-- tooltip -->
<path d="M24 950.500h134a3 3 0 0 1 3 3v34a3 3 0 0 1-3 3h-82l-10 10-8-10h-34a3 3 0 0 1-3-3v-34a3 3 0 0 1 3-3z" fill="#344134" stroke="#5e7a55" stroke-width="1"/>
<text x="36" y="975" textLength="108" lengthAdjust="spacingAndGlyphs" class="t">Tests passed: 1</text>
</svg>
</body></html>
